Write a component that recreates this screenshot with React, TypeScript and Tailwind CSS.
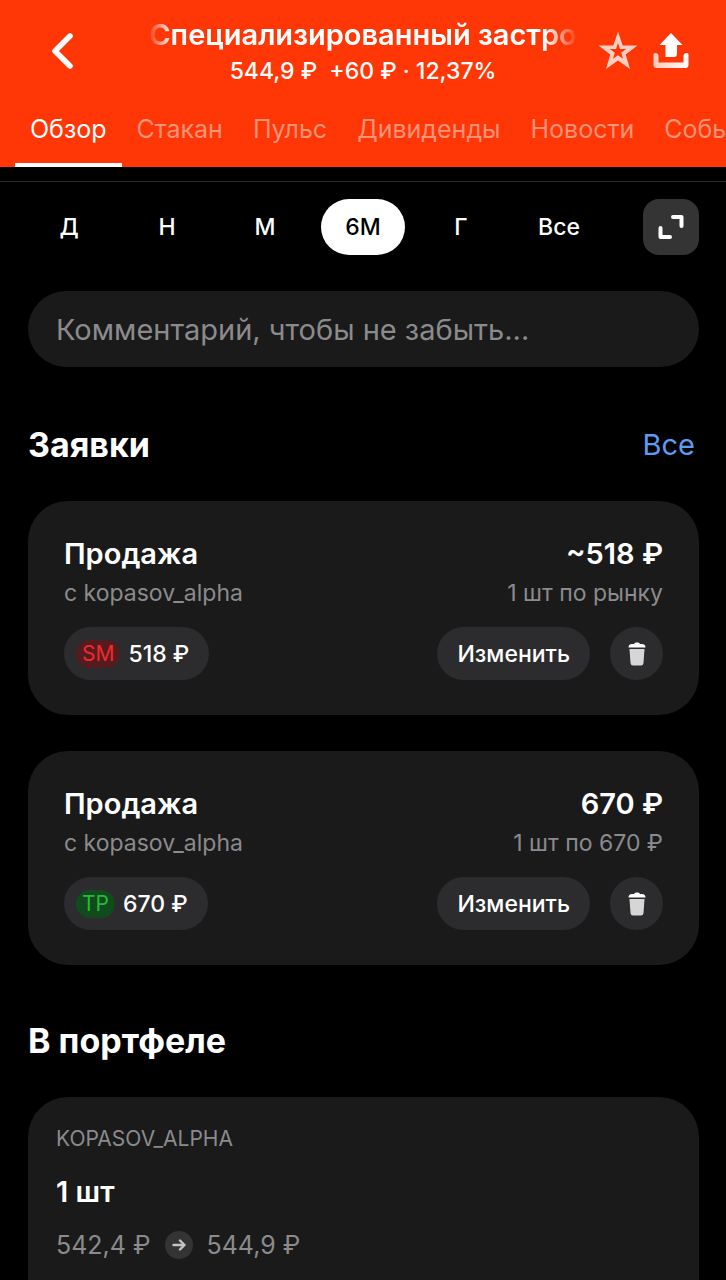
import { useState } from "react";

const tabs = ["Обзор", "Стакан", "Пульс", "Дивиденды", "Новости", "События"];
const periods = ["Д", "Н", "М", "6М", "Г", "Все"];

type Order = {
  id: number;
  total: string;
  terms: string;
  tag: "SM" | "TP";
  price: string;
};

const orders: Order[] = [
  { id: 1, total: "~518 ₽", terms: "1 шт по рынку", tag: "SM", price: "518 ₽" },
  { id: 2, total: "670 ₽", terms: "1 шт по 670 ₽", tag: "TP", price: "670 ₽" },
];

function BackIcon() {
  return (
    <svg width="26" height="38" viewBox="0 0 26 38" fill="none" stroke="currentColor" strokeWidth="5.5" strokeLinecap="round" strokeLinejoin="round">
      <path d="M20 4 5 19l15 15" />
    </svg>
  );
}

function StarIcon() {
  return (
    <svg width="40" height="40" viewBox="0 0 40 40">
      <path
        d="M20 0.500 24.700 14.500H39.500L27.700 23.500 32 38 20 29.400 8 38 12.300 23.500 0.500 14.500H15.300ZM20 12 18 18H11.800L16.800 21.800 15 27.800 20 24.200 25 27.800 23.200 21.800 28.200 18H22Z"
        fill="#ffd0c1"
        fillRule="evenodd"
      />
    </svg>
  );
}

function ShareIcon() {
  return (
    <svg width="36" height="38" viewBox="0 0 36 38">
      <defs>
        <linearGradient id="tray" x1="0" y1="0" x2="1" y2="0">
          <stop offset="0" stopColor="#ffc9b8" />
          <stop offset="1" stopColor="#fff" />
        </linearGradient>
      </defs>
      <path d="M0.500 22.500q0-2 2.500-1.500 2.500.5 2.500 2.500v7h25v-7q0-2 2.500-2.500 2.500-.5 2.500 1.500v10.500q0 3-3 3h-29q-3 0-3-3z" fill="url(#tray)" />
      <path d="M18 1 29.500 13H24v9q0 3-3 3h-8.500V13H6.500z" fill="#fff" />
    </svg>
  );
}

function ExpandIcon() {
  return (
    <svg width="26" height="26" viewBox="0 0 26 26" fill="none" stroke="currentColor" strokeWidth="4" strokeLinecap="round" strokeLinejoin="round">
      <path d="M15 3h8.500v9M2.500 14v9H12" />
    </svg>
  );
}

function TrashIcon() {
  return (
    <svg width="18" height="24" viewBox="0 0 18 24">
      <path d="M0.500 5.500Q0.500 2 4 2h2q.5-1.500 2-1.500h2Q11.500.5 12 2h2q3.500 0 3.500 3.500z" fill="#fff" />
      <path d="M1.500 7h15l-1 14q-.2 2.500-2.500 2.500H5Q2.700 23.500 2.500 21z" fill="#d6d6d6" />
    </svg>
  );
}

function ArrowIcon() {
  return (
    <svg width="14" height="14" viewBox="0 0 14 14" fill="none" stroke="currentColor" strokeWidth="2.4" strokeLinecap="round" strokeLinejoin="round">
      <path d="M1.500 7h11M8 2.500 12.500 7 8 11.500" />
    </svg>
  );
}

function OrderCard({ order }: { order: Order }) {
  const tagColor = order.tag === "SM" ? "bg-[#551b1e] text-[#f3292c]" : "bg-[#114a1d] text-[#2bb839]";

  return (
    <li className="rounded-[40px] bg-[#1a1a1a] px-9 pt-9 pb-[35px]">
      <div className="flex justify-between text-[29px] leading-[34px] font-semibold">
        <h3>Продажа</h3>
        <p>{order.total}</p>
      </div>
      <div className="mt-2 flex justify-between text-[23px] leading-7 text-[#8b8b8e]">
        <p>с kopasov_alpha</p>
        <p>{order.terms}</p>
      </div>
      <div className="mt-5 flex items-center text-[23px] leading-7 font-medium">
        <div className="flex h-[53px] items-center gap-2 rounded-full bg-[#2c2c2e] pr-5 pl-3">
          <span className={`rounded-full px-[6px] text-[21px] leading-7 font-normal ${tagColor}`}>{order.tag}</span>
          <span>{order.price}</span>
        </div>
        <button type="button" className="ml-auto h-[53px] rounded-full bg-[#2c2c2e] px-5">
          Изменить
        </button>
        <button type="button" aria-label="Удалить заявку" className="ml-5 flex size-[53px] items-center justify-center rounded-full bg-[#2c2c2e]">
          <TrashIcon />
        </button>
      </div>
    </li>
  );
}

export default function App() {
  const [tab, setTab] = useState("Обзор");
  const [period, setPeriod] = useState("6М");
  const [comment, setComment] = useState("");

  return (
    <div className="flex min-h-screen flex-col bg-black font-['Inter',sans-serif] text-white">
      <header className="bg-[#ff3606]">
        <div className="flex h-[102px] items-center pr-[37px] pl-[50px]">
          <button type="button" aria-label="Назад" className="w-[98px] shrink-0">
            <BackIcon />
          </button>
          <div className="min-w-0 flex-1 text-center">
            <h1 className="flex justify-center overflow-hidden text-[29px] leading-9 font-semibold whitespace-nowrap mask-[linear-gradient(to_right,transparent,black_24px,black_calc(100%-32px),transparent)]">
              Специализированный застро
            </h1>
            <p className="mt-1 text-[23px] leading-7 font-medium whitespace-pre">544,9 ₽  +60 ₽ · 12,37%</p>
          </div>
          <div className="flex shrink-0 items-center gap-[15px] pl-5">
            <button type="button" aria-label="В избранное">
              <StarIcon />
            </button>
            <button type="button" aria-label="Поделиться">
              <ShareIcon />
            </button>
          </div>
        </div>
        <nav className="flex overflow-hidden pl-[15px] text-[25px] leading-8">
          {tabs.map((t) => (
            <button
              key={t}
              type="button"
              onClick={() => setTab(t)}
              className={`h-[65px] shrink-0 border-b-4 px-[15px] pb-2 ${t === tab ? "border-white text-white" : "border-transparent text-[#ff9478]"}`}
            >
              {t}
            </button>
          ))}
        </nav>
      </header>

      <main className="mt-[14px] flex flex-1 flex-col border-t border-[#2a2a2a] pt-[17px]">
        <div className="flex items-center pr-[27px] pl-5">
          <div className="grid flex-1 grid-cols-6 pr-[35px] text-[23px] font-medium">
            {periods.map((p) => (
              <button
                key={p}
                type="button"
                onClick={() => setPeriod(p)}
                className={`mx-[7px] h-14 rounded-full ${p === period ? "bg-white text-black" : ""}`}
              >
                {p}
              </button>
            ))}
          </div>
          <button type="button" aria-label="Развернуть график" className="flex size-14 items-center justify-center rounded-2xl bg-[#343434]">
            <ExpandIcon />
          </button>
        </div>

        <div className="flex flex-1 flex-col pt-9 pr-[27px] pl-7">
          <input
            type="text"
            aria-label="Комментарий"
            value={comment}
            onChange={(e) => setComment(e.target.value)}
            placeholder="Комментарий, чтобы не забыть..."
            className="h-[76px] w-full rounded-full bg-[#1a1a1a] px-7 text-[29px] outline-none placeholder:text-[#8b8b8e]"
          />

          <section>
            <div className="mt-14 flex items-center justify-between pr-1">
              <h2 className="text-[34px] leading-[44px] font-bold">Заявки</h2>
              <a href="#orders" className="text-[29px] leading-[44px] text-[#5d9bf5]">
                Все
              </a>
            </div>
            <ul id="orders" className="mt-[34px] flex flex-col gap-9">
              {orders.map((order) => (
                <OrderCard key={order.id} order={order} />
              ))}
            </ul>
          </section>

          <section className="flex flex-1 flex-col">
            <h2 className="mt-[54px] text-[34px] leading-[44px] font-bold">В портфеле</h2>
            <div className="mt-[34px] flex-1 rounded-t-[40px] bg-[#1a1a1a] px-7 pt-7">
              <p className="text-[21px] leading-7 text-[#8b8b8e]">KOPASOV_ALPHA</p>
              <p className="mt-[22px] text-[29px] leading-[34px] font-semibold">1 шт</p>
              <div className="mt-5 flex items-center gap-[14px] text-[25px] leading-8 text-[#8b8b8e]">
                <span>542,4 ₽</span>
                <span className="flex size-7 items-center justify-center rounded-full bg-[#343434] text-[#c4c4c6]">
                  <ArrowIcon />
                </span>
                <span>544,9 ₽</span>
              </div>
            </div>
          </section>
        </div>
      </main>
    </div>
  );
}
